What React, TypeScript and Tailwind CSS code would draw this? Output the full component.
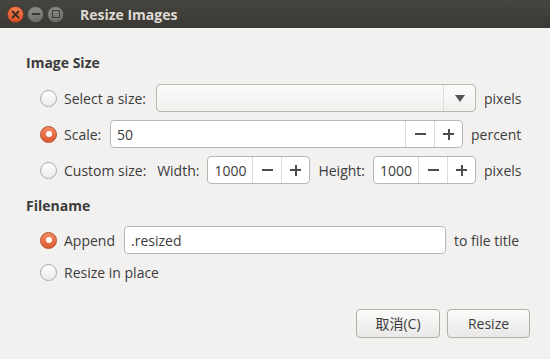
import React from "react";

function Radio({ checked }: { checked?: boolean }) {
  if (checked) {
    return (
      <span className="flex h-[17px] w-[17px] shrink-0 items-center justify-center rounded-full border border-[#b0502e] bg-gradient-to-b from-[#f58a63] to-[#dd5a30]">
        <span className="h-[6px] w-[6px] rounded-full bg-white" />
      </span>
    );
  }
  return (
    <span className="h-[17px] w-[17px] shrink-0 rounded-full border border-[#a9a7a2] bg-gradient-to-b from-white to-[#ecebea]" />
  );
}

function StepButtons() {
  return (
    <>
      <span className="flex h-full w-[29px] shrink-0 items-center justify-center border-l border-[#dcdbd8]">
        <span className="h-[2px] w-[11px] bg-[#4c4c4c]" />
      </span>
      <span className="relative flex h-full w-[28px] shrink-0 items-center justify-center border-l border-[#dcdbd8]">
        <span className="h-[2px] w-[11px] bg-[#4c4c4c]" />
        <span className="absolute h-[11px] w-[2px] bg-[#4c4c4c]" />
      </span>
    </>
  );
}

function Spin({ value, width }: { value: string; width: string }) {
  return (
    <div className={`flex h-[28px] shrink-0 items-center overflow-hidden rounded-[4px] border border-[#b9b7b2] bg-white ${width}`}>
      <span className="flex-1 pl-[6px] text-[#3c3c3c]">{value}</span>
      <StepButtons />
    </div>
  );
}

export default function App() {
  return (
    <div
      className="flex h-[359px] w-[550px] flex-col bg-[#f2f1f0] text-[14px] text-[#3c3c3c]"
      style={{ fontFamily: '"Open Sans", "Noto Sans", "Noto Sans CJK SC", sans-serif' }}
    >
      {/* title bar */}
      <div className="flex h-[28px] shrink-0 items-center bg-gradient-to-b from-[#45443f] to-[#3a3935] pl-[7px]">
        <span className="flex h-[17px] w-[17px] items-center justify-center rounded-full border border-[#8a3a20] bg-gradient-to-b from-[#f47d50] to-[#d9522a]">
          <svg width="9" height="9" viewBox="0 0 9 9">
            <path d="M1.5 1.5 L7.5 7.5 M7.5 1.5 L1.5 7.5" stroke="#3c2a22" strokeWidth="1.8" strokeLinecap="round" />
          </svg>
        </span>
        <span className="ml-[3px] flex h-[17px] w-[17px] items-center justify-center rounded-full border border-[#4a4945] bg-gradient-to-b from-[#8d8b86] to-[#6f6d68]">
          <span className="h-[2px] w-[8px] bg-[#3c3b37]" />
        </span>
        <span className="ml-[3px] flex h-[17px] w-[17px] items-center justify-center rounded-full border border-[#4a4945] bg-gradient-to-b from-[#8d8b86] to-[#6f6d68]">
          <span className="h-[8px] w-[8px] border-[1.5px] border-[#3c3b37]" />
        </span>
        <span className="ml-[16px] text-[14px] font-bold text-[#dfdbd2]">Resize Images</span>
      </div>

      <div className="flex flex-1 flex-col pl-[26px] pr-[26px]">
        <div className="mt-[25px] font-bold leading-[20px]">Image Size</div>

        <div className="mt-[11px] flex flex-col gap-[8px] pl-[14px]">
          <div className="flex h-[28px] items-center">
            <Radio />
            <span className="ml-[7px]">Select a size:</span>
            <div className="ml-auto flex h-[28px] w-[320px] items-center overflow-hidden rounded-[4px] border border-[#b9b7b2] bg-gradient-to-b from-[#fbfbfa] to-[#f1f0ef]">
              <span className="flex-1" />
              <span className="flex h-full w-[32px] items-center justify-center border-l border-[#dcdbd8]">
                <svg width="10" height="7" viewBox="0 0 10 7">
                  <path d="M0 0 H10 L5 7 Z" fill="#555" />
                </svg>
              </span>
            </div>
            <span className="ml-[8px] w-[40px]">pixels</span>
          </div>

          <div className="flex h-[28px] items-center">
            <Radio checked />
            <span className="ml-[7px]">Scale:</span>
            <div className="ml-auto flex h-[28px] w-[353px] items-center overflow-hidden rounded-[4px] border border-[#b9b7b2] bg-white">
              <span className="flex-1 pl-[6px]">50</span>
              <StepButtons />
            </div>
            <span className="ml-[8px] w-[53px]">percent</span>
          </div>

          <div className="flex h-[28px] items-center">
            <Radio />
            <span className="ml-[7px]">Custom size:</span>
            <span className="ml-auto">Width:</span>
            <span className="ml-[8px]">
              <Spin value="1000" width="w-[103px]" />
            </span>
            <span className="ml-[8px]">Height:</span>
            <span className="ml-[8px]">
              <Spin value="1000" width="w-[103px]" />
            </span>
            <span className="ml-[8px] w-[40px]">pixels</span>
          </div>
        </div>

        <div className="mt-[12px] font-bold leading-[20px]">Filename</div>

        <div className="mt-[10px] flex flex-col gap-[4px] pl-[14px]">
          <div className="flex h-[28px] items-center">
            <Radio checked />
            <span className="ml-[7px]">Append</span>
            <div className="ml-[9px] flex h-[28px] w-[322px] shrink-0 items-center rounded-[4px] border border-[#b9b7b2] bg-white">
              <span className="pl-[6px]">.resized</span>
            </div>
            <span className="ml-[8px] shrink-0 whitespace-nowrap">to file title</span>
          </div>
          <div className="flex h-[28px] items-center">
            <Radio />
            <span className="ml-[7px]">Resize in place</span>
          </div>
        </div>

        <div className="mt-auto mb-[21px] mr-[-6px] flex justify-end gap-[7px]">
          <button className="h-[29px] w-[84px] rounded-[4px] border border-[#b0aea9] bg-gradient-to-b from-[#fbfbfa] to-[#e9e8e6] text-[#3c3c3c]">
            取消(C)
          </button>
          <button className="h-[29px] w-[83px] rounded-[4px] border border-[#b0aea9] bg-gradient-to-b from-[#fbfbfa] to-[#e9e8e6] text-[#3c3c3c]">
            Resize
          </button>
        </div>
      </div>
    </div>
  );
}
